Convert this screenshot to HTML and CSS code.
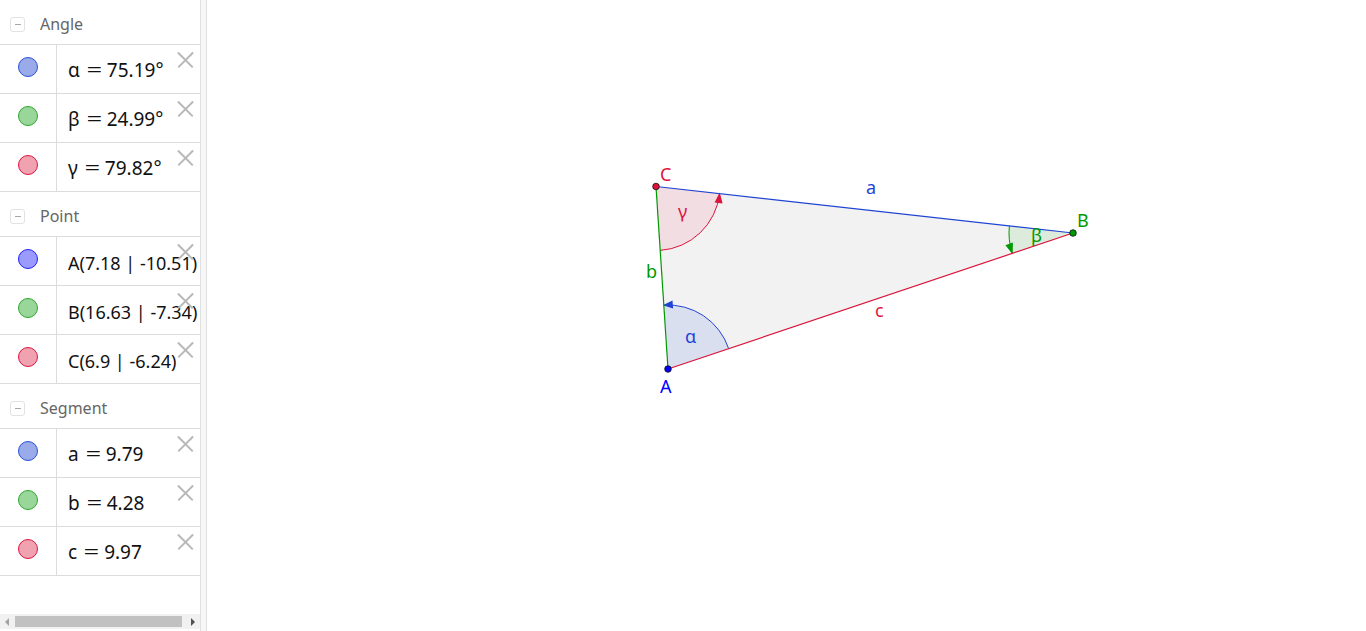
FILE: index.html
```html
<!DOCTYPE html>
<html>
<head>
<meta charset="utf-8">
<link rel="stylesheet" href="styles.css">
</head>
<body>
<div class="app">
  <aside class="algebra">
    <div class="list">
      <div class="group-head"><span class="toggle"></span><span class="group-name">Angle</span></div>
      <div class="item"><div class="marble m-blue"></div><div class="value">α<span class="eq">=</span>75.19°</div><span class="del"></span></div>
      <div class="item"><div class="marble m-green"></div><div class="value">β<span class="eq">=</span>24.99°</div><span class="del"></span></div>
      <div class="item"><div class="marble m-red"></div><div class="value">γ<span class="eq">=</span>79.82°</div><span class="del"></span></div>

      <div class="group-head"><span class="toggle"></span><span class="group-name">Point</span></div>
      <div class="item"><div class="marble m-pblue"></div><div class="value pt">A(7.18 | -10.51)</div><span class="del"></span></div>
      <div class="item"><div class="marble m-green"></div><div class="value pt">B(16.63 | -7.34)</div><span class="del"></span></div>
      <div class="item"><div class="marble m-red"></div><div class="value pt">C(6.9 | -6.24)</div><span class="del"></span></div>

      <div class="group-head"><span class="toggle"></span><span class="group-name">Segment</span></div>
      <div class="item"><div class="marble m-blue"></div><div class="value">a<span class="eq">=</span>9.79</div><span class="del"></span></div>
      <div class="item"><div class="marble m-green"></div><div class="value">b<span class="eq">=</span>4.28</div><span class="del"></span></div>
      <div class="item"><div class="marble m-red"></div><div class="value">c<span class="eq">=</span>9.97</div><span class="del"></span></div>
    </div>
    <div class="hscroll">
      <span class="arr arr-left"></span>
      <span class="thumb"></span>
      <span class="arr arr-right"></span>
    </div>
  </aside>
  <div class="splitter"></div>
  <main class="canvas">
    <svg class="drawing" width="1159" height="631" viewBox="207 0 1159 631" xmlns="http://www.w3.org/2000/svg">
      <!-- polygon -->
      <polygon points="668,369 1073,233 656,186.5" fill="#f2f2f2"/>
      <!-- angle sectors -->
      <path d="M668 369 L728.67 348.62 A64 64 0 0 0 663.8 305.14 Z" fill="#dadff0"/>
      <path d="M656 186.5 L660.2 250.36 A64 64 0 0 0 719.6 193.59 Z" fill="#f2dde2"/>
      <path d="M1073 233 L1009.4 225.9 A64 64 0 0 0 1012.33 253.38 Z" fill="#dcebdc"/>
      <path d="M728.67 348.62 A64 64 0 0 0 663.8 305.14" fill="none" stroke="#1f44d4" stroke-width="1"/>
      <path d="M660.2 250.36 A64 64 0 0 0 719.6 193.59" fill="none" stroke="#dc143c" stroke-width="1"/>
      <path d="M1009.4 225.9 A64 64 0 0 0 1012.33 253.38" fill="none" stroke="#009900" stroke-width="1"/>
      <!-- arrowheads -->
      <polygon points="662.8,305.2 672.5,300.5 673.1,308.5" fill="#1f44d4"/>
      <polygon points="719.7,192.6 722.6,203.5 714.6,202.6" fill="#dc143c"/>
      <polygon points="1012.65,254.3 1005.4,245.2 1012.9,242.6" fill="#009900"/>
      <!-- sides -->
      <line x1="1073" y1="233" x2="656" y2="186.5" stroke="#1f44d4" stroke-width="1.2"/>
      <line x1="656" y1="186.5" x2="668" y2="369" stroke="#009900" stroke-width="1.2"/>
      <line x1="668" y1="369" x2="1073" y2="233" stroke="#dc143c" stroke-width="1.2"/>
      <!-- points -->
      <circle cx="668" cy="369" r="3.3" fill="#0000ff" stroke="#111" stroke-width="0.8"/>
      <circle cx="1073" cy="233" r="3.3" fill="#009900" stroke="#111" stroke-width="0.8"/>
      <circle cx="656" cy="186.5" r="3.3" fill="#dc143c" stroke="#111" stroke-width="0.8"/>
      <!-- labels -->
      <g class="lbl">
        <text x="660" y="181" fill="#dc143c">C</text>
        <text x="660" y="393" fill="#0000ff">A</text>
        <text x="1077" y="227" fill="#009900">B</text>
        <text x="866" y="194" fill="#1f44d4">a</text>
        <text x="646" y="278" fill="#009900">b</text>
        <text x="875" y="317" fill="#dc143c">c</text>
        <text x="678" y="218" fill="#dc143c">γ</text>
        <text x="685" y="343" fill="#1f44d4">α</text>
        <text x="1031" y="242" fill="#009900">β</text>
      </g>
    </svg>
  </main>
</div>
</body>
</html>
```

FILE: styles.css
```css
html, body {
  margin: 0;
  padding: 0;
  background: #ffffff;
}

.app {
  display: flex;
  width: 1366px;
  height: 631px;
  overflow: hidden;
  font-family: "Noto Sans", "DejaVu Sans", sans-serif;
}

.algebra {
  width: 200px;
  flex: none;
  display: flex;
  flex-direction: column;
  background: #fff;
  overflow: hidden;
}

.list {
  flex: 1;
}

.group-head {
  height: 44px;
  border-bottom: 1px solid #dcdcdc;
  display: flex;
  align-items: flex-start;
  box-sizing: content-box;
}

.toggle {
  width: 13px;
  height: 13px;
  margin: 17px 0 0 10px;
  border: 1px solid #e2e2e2;
  border-radius: 3px;
  position: relative;
  flex: none;
}

.toggle::after {
  content: "";
  position: absolute;
  left: 4px;
  top: 6px;
  width: 6px;
  height: 1px;
  background: #a8a8a8;
}

.group-name {
  margin: 13px 0 0 15px;
  font-size: 16px;
  line-height: 22px;
  color: #666666;
}

.item {
  height: 48px;
  border-bottom: 1px solid #dcdcdc;
  display: flex;
  position: relative;
}

.marble {
  width: 56px;
  flex: none;
  border-right: 1px solid #dcdcdc;
  position: relative;
}

.marble::before {
  content: "";
  position: absolute;
  left: 18px;
  top: 12px;
  width: 18px;
  height: 18px;
  border-radius: 50%;
  border: 1px solid;
}

.m-blue::before { background: #9aabea; border-color: #2a4fd6; }
.m-pblue::before { background: #9a9aff; border-color: #2020ff; }
.m-green::before { background: #99d699; border-color: #2ea62e; }
.m-red::before { background: #f0a2b1; border-color: #dc143c; }

.value {
  padding: 13px 0 0 11px;
  font-size: 19px;
  line-height: 25px;
  color: #111;
  white-space: nowrap;
}

.value.pt {
  font-size: 18px;
  padding-top: 14px;
  line-height: 24px;
}

.eq {
  display: inline-block;
  width: 15px;
  margin: 0 5px 0 7px;
  text-align: center;
  transform: scaleX(1.45);
}

.del {
  position: absolute;
  right: 7px;
  top: 7px;
  width: 16px;
  height: 16px;
}

.del::before,
.del::after {
  content: "";
  position: absolute;
  left: -2px;
  top: 7px;
  width: 21px;
  height: 1.5px;
  background: #b8b8b8;
  transform: rotate(45deg);
}

.del::after {
  transform: rotate(-45deg);
}

.hscroll {
  height: 15px;
  margin-bottom: 2px;
  background: #f1f1f1;
  display: flex;
  align-items: center;
}

.arr {
  width: 0;
  height: 0;
  border-top: 4px solid transparent;
  border-bottom: 4px solid transparent;
  flex: none;
}

.arr-left {
  border-right: 4px solid #a3a3a3;
  margin: 0 6px 0 5px;
}

.arr-right {
  border-left: 4px solid #505050;
  margin: 0 5px 0 9px;
}

.thumb {
  height: 11px;
  width: 167px;
  background: #c1c1c1;
}

.splitter {
  width: 5px;
  flex: none;
  background: #f7f7f7;
  border-left: 1px solid #e0e0e0;
  border-right: 1px solid #e0e0e0;
}

.canvas {
  flex: 1;
  background: #fff;
  overflow: hidden;
}

.drawing {
  display: block;
}

.lbl text {
  font-family: "Noto Sans", "DejaVu Sans", sans-serif;
  font-size: 18px;
}
```
